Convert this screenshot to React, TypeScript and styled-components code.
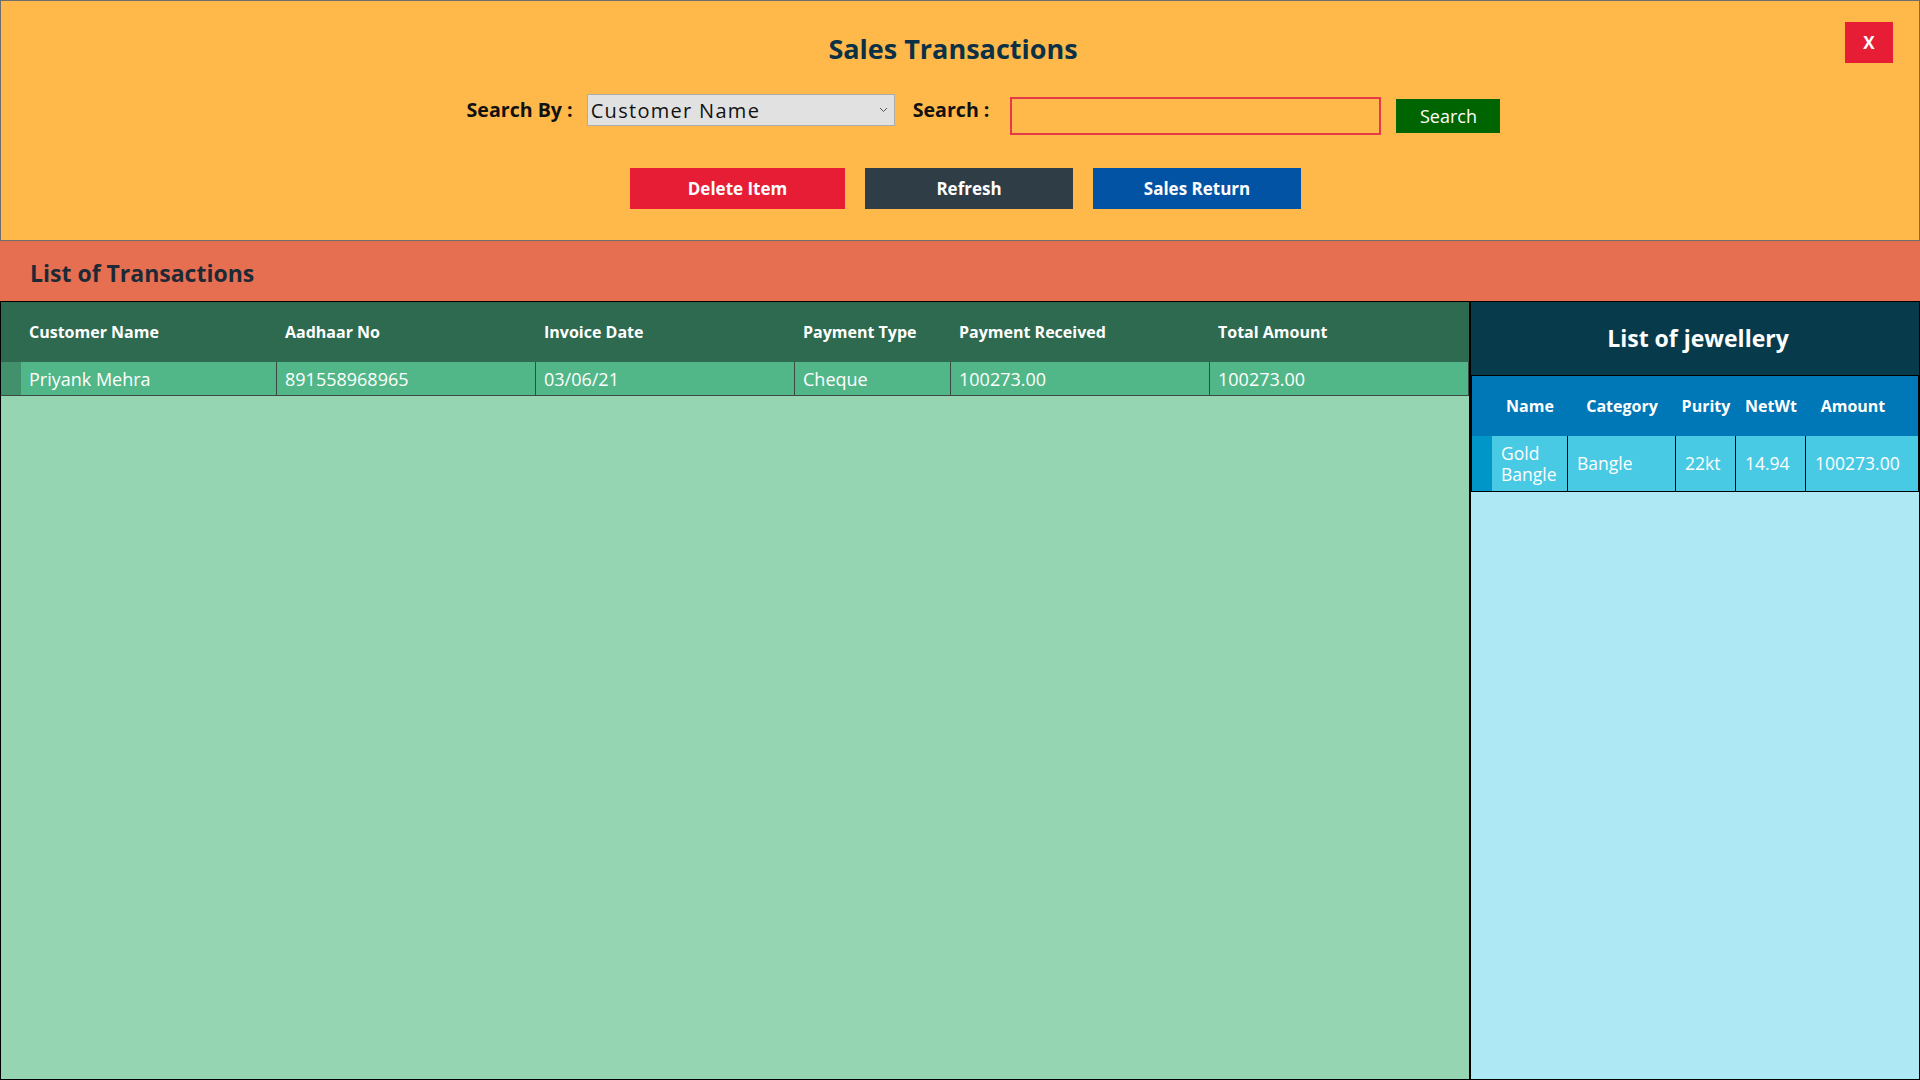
import React from "react";
import styled, { createGlobalStyle } from "styled-components";

const GlobalStyle = createGlobalStyle`
  html, body { margin: 0; padding: 0; }
  body { font-family: "Open Sans", "Noto Sans", sans-serif; background: #ffffff; }
  * { box-sizing: border-box; }
`;

const Page = styled.div`
  width: 1920px;
  height: 1080px;
  display: flex;
  flex-direction: column;
  overflow: hidden;
`;

const Header = styled.header`
  background: #ffb84a;
  border: 1px solid #6e6e6e;
  padding: 21px 26px 31px 12px;
  display: flex;
  flex-direction: column;
  height: 241px;
`;

const TitleRow = styled.div`
  display: grid;
  grid-template-columns: 1fr auto 1fr;
  height: 46px;
`;

const Title = styled.h1`
  grid-column: 2;
  margin: 9px 0 0;
  font-size: 27px;
  line-height: 36px;
  font-weight: 700;
  color: #0b3147;
  align-self: start;
`;

const CloseButton = styled.button`
  grid-column: 3;
  justify-self: end;
  align-self: start;
  width: 48px;
  height: 41px;
  border: none;
  background: #e71d36;
  color: #ffffff;
  font-family: "Open Sans", sans-serif;
  font-size: 17px;
  font-weight: 700;
  padding: 0;
  cursor: pointer;
`;

const SearchRow = styled.div`
  margin-top: 26px;
  display: flex;
  align-items: flex-start;
  justify-content: center;
  padding-left: 61px;
  height: 41px;
`;

const Label = styled.label<{ $gap: number }>`
  font-size: 19.6px;
  font-weight: 700;
  line-height: 32px;
  color: #111111;
  margin-right: ${(p) => p.$gap}px;
  white-space: nowrap;
`;

const Combo = styled.div`
  width: 308px;
  height: 32px;
  background: #e1e1e1;
  border: 1px solid #acacac;
  display: flex;
  align-items: center;
  justify-content: space-between;
  padding: 0 6px 0 3px;
  margin-right: 18px;
  font-family: "Open Sans", sans-serif;
  font-weight: 400;
  font-size: 20px;
  letter-spacing: 1.3px;
  color: #111111;
`;

const SearchInput = styled.input`
  width: 371px;
  height: 38px;
  margin-top: 3px;
  margin-right: 15px;
  border: 2px solid #e5394a;
  background: transparent;
  outline: none;
  font-family: "Open Sans", sans-serif;
  font-size: 18px;
  padding: 0 6px;
`;

const SearchButton = styled.button`
  width: 104px;
  height: 34px;
  margin-top: 5px;
  border: none;
  background: #006400;
  color: #ffffff;
  font-family: "Open Sans", sans-serif;
  font-size: 18px;
  font-weight: 400;
  padding: 0;
`;

const ActionRow = styled.div`
  margin-top: 33px;
  display: flex;
  justify-content: center;
  gap: 20px;
  padding-left: 25px;
`;

const ActionButton = styled.button<{ $bg: string; $w: number }>`
  width: ${(p) => p.$w}px;
  height: 41px;
  border: none;
  background: ${(p) => p.$bg};
  color: #ffffff;
  font-family: "Open Sans", sans-serif;
  font-size: 17px;
  font-weight: 700;
  padding: 0;
`;

const SectionBar = styled.div`
  height: 60px;
  background: #e76f51;
  display: flex;
  align-items: center;
  padding: 4px 0 0 30px;
`;

const SectionTitle = styled.h2`
  margin: 0;
  font-size: 23px;
  font-weight: 700;
  color: #1d2a35;
`;

const Main = styled.main`
  flex: 1;
  border: 1px solid #000000;
  display: grid;
  grid-template-columns: 1fr 448px;
  min-height: 0;
`;

const LeftPanel = styled.section`
  background: #95d5b2;
  border-right: 2px solid #000000;
`;

const TxGrid = styled.div`
  display: grid;
  grid-template-columns: 20px 256px 259px 259px 156px 259px 259px;
`;

const TxHead = styled.div`
  height: 60px;
  background: #2d6a4f;
  color: #ffffff;
  font-size: 16px;
  font-weight: 700;
  display: flex;
  align-items: center;
  padding-left: 8px;
  white-space: nowrap;
`;

const TxRowHeader = styled.div`
  height: 34px;
  background: #40916c;
  border-bottom: 1px solid #3a4a42;
`;

const TxCell = styled.div`
  height: 34px;
  background: #52b788;
  border-right: 1px solid #3a4a42;
  border-bottom: 1px solid #3a4a42;
  color: #ffffff;
  font-size: 18px;
  font-weight: 400;
  display: flex;
  align-items: center;
  padding-left: 8px;
  white-space: nowrap;
`;

const RightPanel = styled.section`
  background: #ade8f4;
  display: flex;
  flex-direction: column;
`;

const JewelTitle = styled.div`
  height: 74px;
  background: #073b4c;
  border-bottom: 1px solid #000000;
  display: flex;
  align-items: center;
  justify-content: center;
  padding: 0 0 2px 6px;
  color: #ffffff;
  font-size: 23px;
  font-weight: 700;
`;

const JewelGrid = styled.div`
  display: grid;
  grid-template-columns: 20px 76px 108px 60px 70px 112px;
  border-left: 1px solid #000000;
  border-right: 1px solid #000000;
`;

const JewelHead = styled.div<{ $shift?: number }>`
  height: 60px;
  background: #0077b6;
  color: #ffffff;
  font-size: 16px;
  font-weight: 700;
  display: flex;
  align-items: center;
  justify-content: center;
  padding-right: ${(p) => p.$shift ?? 0}px;
  white-space: nowrap;
`;

const JewelRowHeader = styled.div`
  height: 56px;
  background: #0096c7;
  border-bottom: 1px solid #000000;
`;

const JewelCell = styled.div`
  height: 56px;
  background: #48cae4;
  border-right: 1px solid #000000;
  border-bottom: 1px solid #000000;
  color: #ffffff;
  font-size: 17.5px;
  line-height: 21px;
  font-weight: 400;
  display: flex;
  align-items: center;
  padding-left: 9px;
  &:last-child { border-right: none; }
`;

const Chevron = () => (
  <svg width="9" height="6" viewBox="0 0 9 6" aria-hidden="true">
    <path d="M1 1 L4.5 4.5 L8 1" fill="none" stroke="#555" strokeWidth="1" />
  </svg>
);

const transactions = [
  {
    name: "Priyank Mehra",
    aadhaar: "891558968965",
    date: "03/06/21",
    type: "Cheque",
    received: "100273.00",
    total: "100273.00",
  },
];

const txHeaders = [
  "Customer Name",
  "Aadhaar No",
  "Invoice Date",
  "Payment Type",
  "Payment Received",
  "Total Amount",
];

const jewelHeaders: { label: string; shift?: number }[] = [
  { label: "Name" },
  { label: "Category" },
  { label: "Purity" },
  { label: "NetWt" },
  { label: "Amount", shift: 18 },
];

export default function App() {
  return (
    <Page>
      <GlobalStyle />
      <Header>
        <TitleRow>
          <Title>Sales Transactions</Title>
          <CloseButton>X</CloseButton>
        </TitleRow>
        <SearchRow>
          <Label $gap={14}>Search By :</Label>
          <Combo role="combobox">
            <span>Customer Name</span>
            <Chevron />
          </Combo>
          <Label $gap={21}>Search :</Label>
          <SearchInput type="text" />
          <SearchButton>Search</SearchButton>
        </SearchRow>
        <ActionRow>
          <ActionButton $bg="#e71d36" $w={215}>Delete Item</ActionButton>
          <ActionButton $bg="#2f3e46" $w={208}>Refresh</ActionButton>
          <ActionButton $bg="#0353a4" $w={208}>Sales Return</ActionButton>
        </ActionRow>
      </Header>
      <SectionBar>
        <SectionTitle>List of Transactions</SectionTitle>
      </SectionBar>
      <Main>
        <LeftPanel>
          <TxGrid>
            <TxHead />
            {txHeaders.map((h) => (
              <TxHead key={h}>{h}</TxHead>
            ))}
            {transactions.map((t) => (
              <React.Fragment key={t.aadhaar}>
                <TxRowHeader />
                <TxCell>{t.name}</TxCell>
                <TxCell>{t.aadhaar}</TxCell>
                <TxCell>{t.date}</TxCell>
                <TxCell>{t.type}</TxCell>
                <TxCell>{t.received}</TxCell>
                <TxCell>{t.total}</TxCell>
              </React.Fragment>
            ))}
          </TxGrid>
        </LeftPanel>
        <RightPanel>
          <JewelTitle>List of jewellery</JewelTitle>
          <JewelGrid>
            <JewelHead />
            {jewelHeaders.map((h) => (
              <JewelHead key={h.label} $shift={h.shift}>{h.label}</JewelHead>
            ))}
            <JewelRowHeader />
            <JewelCell>Gold Bangle</JewelCell>
            <JewelCell>Bangle</JewelCell>
            <JewelCell>22kt</JewelCell>
            <JewelCell>14.94</JewelCell>
            <JewelCell>100273.00</JewelCell>
          </JewelGrid>
        </RightPanel>
      </Main>
    </Page>
  );
}
